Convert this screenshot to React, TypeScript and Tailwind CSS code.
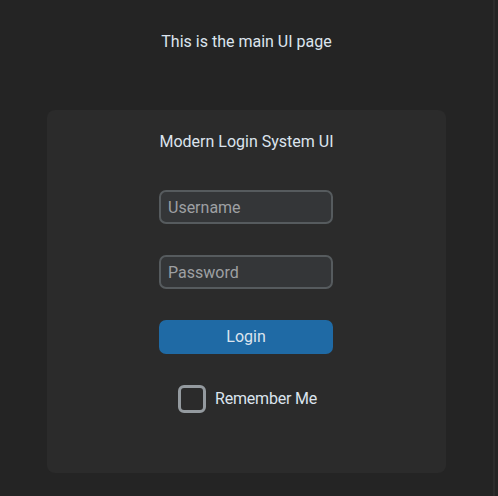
import React from "react";

export default function App() {
  return (
    <div
      className="w-[498px] h-[496px] bg-[#242424] flex overflow-hidden"
      style={{ fontFamily: "Roboto, 'Noto Sans', sans-serif" }}
    >
      <div className="w-[493px] h-full flex flex-col items-center">
        <div className="mt-[32px] h-[20px] leading-[20px] text-[16px] text-[#dce4ee]">
          This is the main UI page
        </div>
        <div className="mt-[58px] w-[399px] h-[363px] bg-[#2b2b2b] rounded-[8px] flex flex-col items-center">
          <div className="mt-[22px] h-[20px] leading-[20px] text-[16px] text-[#dce4ee]">
            Modern Login System UI
          </div>
          <input
            placeholder="Username"
            className="mt-[38px] ml-[-1px] w-[174px] h-[34px] rounded-[7px] border-2 border-[#565b5e] bg-[#343638] px-[7px] text-[16px] text-[#dce4ee] placeholder:text-[#9ea0a3] outline-none"
          />
          <input
            placeholder="Password"
            type="password"
            className="mt-[31px] ml-[-1px] w-[174px] h-[34px] rounded-[7px] border-2 border-[#565b5e] bg-[#343638] px-[7px] text-[16px] text-[#dce4ee] placeholder:text-[#9ea0a3] outline-none"
          />
          <button className="mt-[31px] ml-[-1px] w-[174px] h-[34px] rounded-[7px] bg-[#1f6aa5] text-[16px] text-[#dce4ee]">
            Login
          </button>
          <div className="mt-[31px] flex items-center gap-[9px] ml-[2px]">
            <div className="w-[28px] h-[28px] rounded-[6px] border-[3px] border-[#949a9f]" />
            <span className="text-[16px] text-[#dce4ee] tracking-[-0.2px]">Remember Me</span>
          </div>
        </div>
      </div>
      <div className="w-[2px] h-full bg-[#2c2c2c]" />
    </div>
  );
}
